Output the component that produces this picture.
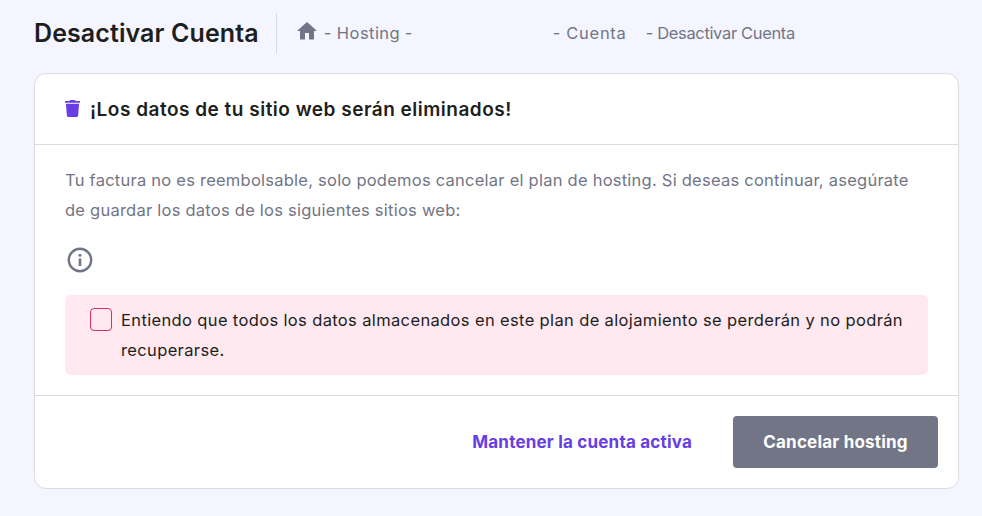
<div class="page">
  <header class="head">
    <h1>Desactivar Cuenta</h1>
    <nav class="crumbs">
      <svg class="home" viewBox="0 0 24 24" aria-hidden="true"><path d="M10 20.500v-6.500h4v6.500h5v-8.500h3L12 3 2 12h3v8.500z"/></svg>
      <span class="c1">- Hosting</span>
      <span class="c2">-</span>
      <span class="c3">- Cuenta</span>
      <span class="c4">- Desactivar Cuenta</span>
    </nav>
  </header>
  <section class="card">
    <div class="title">
      <svg class="trash" viewBox="0 0 16 18" preserveAspectRatio="none" aria-hidden="true"><path d="M5.600 0h4.800l.8 1H16v2H0V1h4.800zM1 4h14l-1 12.400c-.1.900-.8 1.600-1.700 1.600H3.700c-.9 0-1.600-.7-1.700-1.600z"/></svg>
      <h2>¡Los datos de tu sitio web serán eliminados!</h2>
    </div>
    <div class="body">
      <p>Tu factura no es reembolsable, solo podemos cancelar el plan de hosting. Si deseas continuar, asegúrate de guardar los datos de los siguientes sitios web:</p>
      <svg class="info" viewBox="0 0 26 26" aria-hidden="true"><circle cx="13" cy="13" r="11.200" fill="none" stroke="#727586" stroke-width="2.400"/><circle cx="13" cy="8.300" r="1.500" fill="#727586"/><rect x="11.700" y="11.500" width="2.600" height="7.500" rx=".5" fill="#727586"/></svg>
      <div class="alert">
        <span class="check"></span>
        <span class="msg">Entiendo que todos los datos almacenados en este plan de alojamiento se perderán y no podrán recuperarse.</span>
      </div>
    </div>
    <footer class="foot">
      <button class="link">Mantener la cuenta activa</button>
      <button class="primary">Cancelar hosting</button>
    </footer>
  </section>
</div>

<style>
  :global(body) { margin: 0; background: #f4f5ff; }
  .page { width: 982px; height: 516px; box-sizing: border-box; padding: 13px 23px 0 34px; font-family: Inter, "Liberation Sans", sans-serif; overflow: hidden; }
  .head { display: flex; align-items: center; height: 40px; margin-bottom: 20px; }
  h1 { margin: 0; font-size: 25px; font-weight: 600; color: #1d1e20; letter-spacing: 0.1px; padding-right: 17px; line-height: 40px; white-space: nowrap; box-shadow: 1px 0 0 #d8dae0; }
  .crumbs { display: flex; align-items: center; margin-left: 19px; font-size: 16.500px; color: #727586; white-space: nowrap; }
  .home { width: 24px; height: 24px; fill: #727586; margin-right: 5px; margin-top: -4px; }
  .c1 { width: 81px; letter-spacing: 0.45px; }
  .c2 { width: 148px; }
  .c3 { width: 93px; letter-spacing: 0.7px; }
  .c4 { letter-spacing: -0.35px; }
  .card { box-sizing: border-box; height: 416px; background: #fff; border: 1px solid #dadce0; border-radius: 12px; }
  .title { display: flex; align-items: center; height: 70px; padding-left: 30px; border-bottom: 1px solid #dadce0; }
  .trash { width: 15px; height: 17px; fill: #673de6; margin-right: 10px; margin-top: -1px; }
  h2 { margin: 0; font-size: 19px; font-weight: 600; color: #1d1e20; letter-spacing: 0.5px; }
  .body { padding: 20px 30px; height: 251px; box-sizing: border-box; border-bottom: 1px solid #dadce0; }
  p { margin: 0 0 22px; max-width: 850px; font-size: 16.500px; line-height: 30px; color: #727586; letter-spacing: 0.24px; }
  .info { display: block; width: 26px; height: 26px; margin: 0 0 22px 2px; }
  .alert { display: flex; align-items: flex-start; box-sizing: border-box; height: 80px; padding: 10px 24px; background: #ffe8ef; border-radius: 6px; font-size: 16.500px; line-height: 30px; letter-spacing: 0.36px; }
  .check { flex: none; box-sizing: border-box; width: 22px; height: 23px; margin: 3px 9px 0 1px; border: 1.500px solid #d63163; border-radius: 4px; }
  .msg { color: #1d1e20; }
  .foot { display: flex; justify-content: flex-end; align-items: center; height: 92px; padding-right: 20px; gap: 41px; }
  button { border: 0; background: none; font: inherit; font-size: 17px; font-weight: 700; letter-spacing: 0.2px; padding: 0; }
  .link { color: #673de6; }
  .primary { width: 205px; height: 52px; background: #727586; color: #fff; border-radius: 4px; }
</style>
